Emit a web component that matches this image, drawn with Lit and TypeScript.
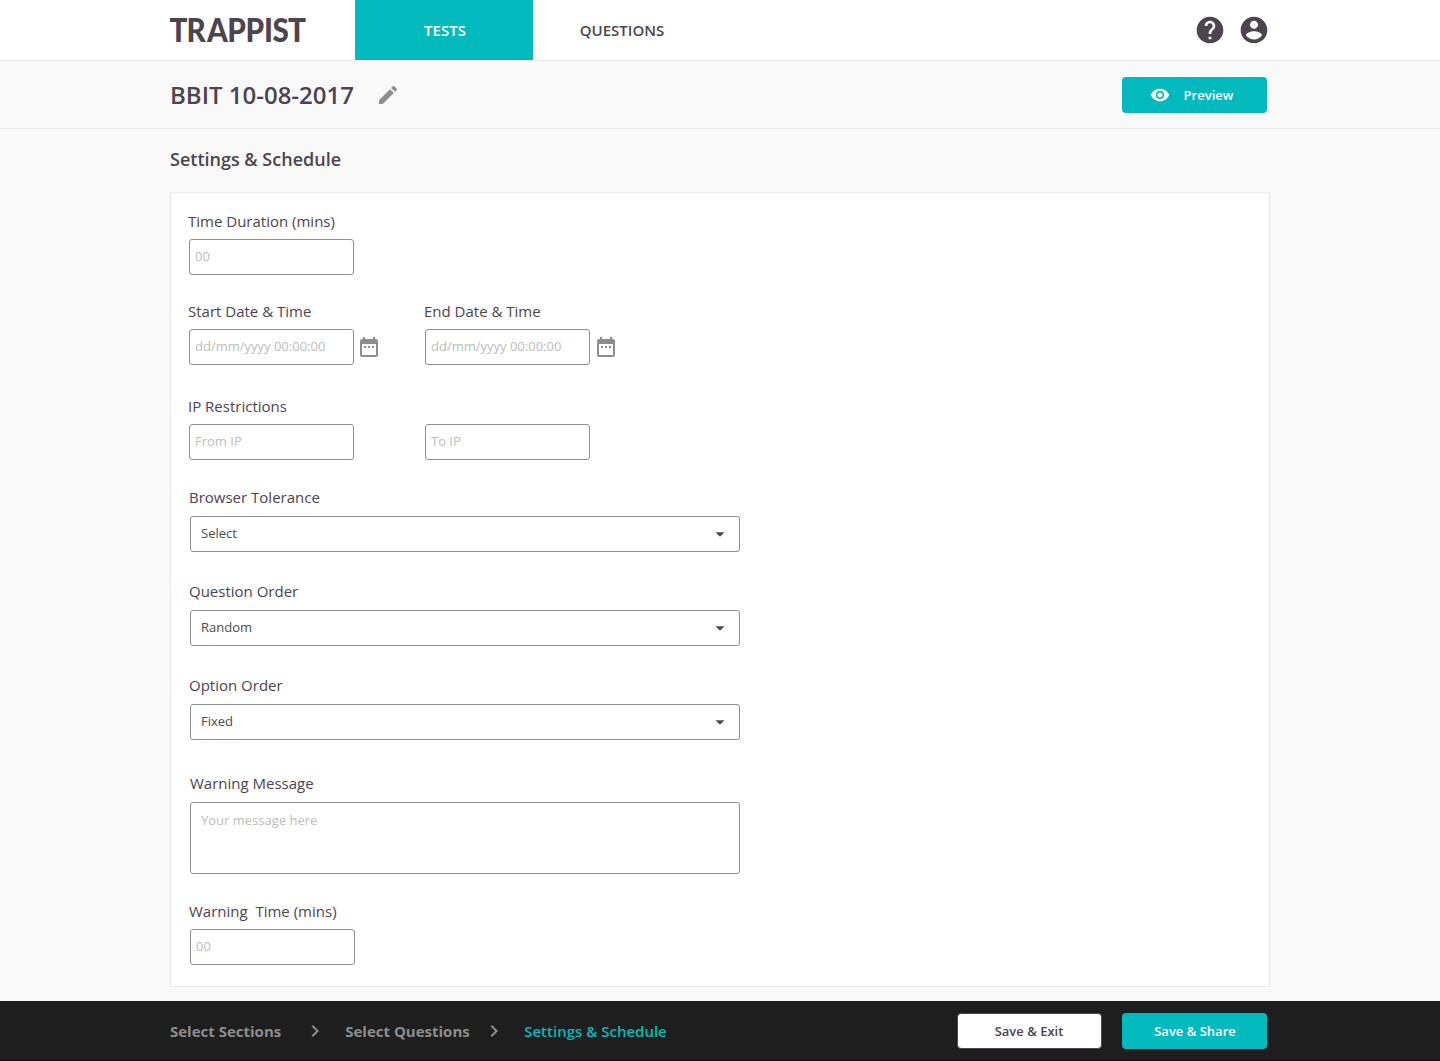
import { LitElement, html, css, svg } from "lit";
import { customElement, property } from "lit/decorators.js";

const icons = {
  pencil: svg`<path d="M3 17.25V21h3.75L17.81 9.94l-3.75-3.75L3 17.25zM20.71 7.04c.39-.39.39-1.02 0-1.41l-2.34-2.34c-.39-.39-1.02-.39-1.41 0l-1.83 1.83 3.75 3.75 1.83-1.83z"/>`,
  help: svg`<path d="M12 2C6.48 2 2 6.48 2 12s4.48 10 10 10 10-4.48 10-10S17.52 2 12 2zm1 17h-2v-2h2v2zm2.07-7.75l-.9.92C13.45 12.9 13 13.5 13 15h-2v-.5c0-1.1.45-2.1 1.17-2.83l1.24-1.26c.37-.36.59-.86.59-1.41 0-1.1-.9-2-2-2s-2 .9-2 2H8c0-2.21 1.79-4 4-4s4 1.79 4 4c0 .88-.36 1.68-.93 2.25z"/>`,
  account: svg`<path d="M12 2C6.48 2 2 6.48 2 12s4.48 10 10 10 10-4.48 10-10S17.52 2 12 2zm0 3c1.66 0 3 1.34 3 3s-1.34 3-3 3-3-1.34-3-3 1.34-3 3-3zm0 14.2c-2.5 0-4.71-1.28-6-3.22.03-1.99 4-3.08 6-3.08 1.99 0 5.97 1.09 6 3.08-1.29 1.94-3.5 3.22-6 3.22z"/>`,
  eye: svg`<path d="M12 4.5C7 4.5 2.73 7.61 1 12c1.73 4.39 6 7.5 11 7.5s9.27-3.11 11-7.5c-1.73-4.39-6-7.5-11-7.5zM12 17c-2.76 0-5-2.24-5-5s2.24-5 5-5 5 2.24 5 5-2.24 5-5 5zm0-8c-1.66 0-3 1.34-3 3s1.34 3 3 3 3-1.34 3-3-1.34-3-3-3z"/>`,
  calendar: svg`<path d="M9 11H7v2h2v-2zm4 0h-2v2h2v-2zm4 0h-2v2h2v-2zm2-7h-1V2h-2v2H8V2H6v2H5c-1.11 0-1.99.9-1.99 2L3 20c0 1.1.89 2 2 2h14c1.1 0 2-.9 2-2V6c0-1.1-.9-2-2-2zm0 16H5V9h14v11z"/>`,
  chevron: svg`<path d="M10 6L8.59 7.41 13.17 12l-4.58 4.59L10 18l6-6z"/>`,
  caret: svg`<path d="M7 10l5 5 5-5z"/>`,
};

@customElement("ui-icon")
export class UiIcon extends LitElement {
  @property() name: keyof typeof icons = "help";
  static styles = css`
    :host { display: inline-flex; flex: none; width: 24px; height: 24px; }
    svg { width: 100%; height: 100%; fill: currentColor; display: block; }
  `;
  render() {
    return html`<svg viewBox="0 0 24 24" aria-hidden="true">${icons[this.name]}</svg>`;
  }
}

@customElement("app-root")
export class AppRoot extends LitElement {
  static styles = css`
    :host {
      display: flex; flex-direction: column; width: 1440px; height: 1061px;
      background: #f9f9f9; color: #4d444f; overflow: hidden;
      font-family: "Open Sans", sans-serif;
    }
    * { box-sizing: border-box; }
    .top, .title-bar, .footer { display: flex; align-items: center; padding: 0 173px 0 170px; flex: none; }
    .top { height: 61px; background: #fff; border-bottom: 1px solid #ebebeb; }
    .logo { width: 185px; height: 60px; flex: none; overflow: visible; }
    .logo text { font: 900 33px Lato, sans-serif; fill: #4d444f; }
    .tab { height: 60px; display: flex; align-items: center; justify-content: center; width: 178px; font-size: 15px; font-weight: 600; padding-bottom: 1px; }
    .tab.active { background: #02babd; color: #fff; padding-left: 2px; }
    .push { margin-left: auto; }
    .round { width: 32px; height: 32px; }
    .round-group { display: flex; gap: 12px; margin-right: -3px; }
    .title-bar { height: 68px; border-bottom: 1px solid #ebebeb; }
    h1 { margin: 0 22px 0 0; font-size: 24px; font-weight: 600; line-height: 34px; white-space: nowrap; }
    .edit { color: #8d8d8d; }
    .btn {
      width: 145px; height: 36px; border: 0; border-radius: 4px; background: #02babd; color: #fff;
      font: 600 13px "Open Sans", sans-serif; display: flex; align-items: center; justify-content: center; padding: 0;
    }
    .btn.preview { gap: 14px; padding-right: 6px; }
    .btn.preview ui-icon { width: 20px; height: 20px; }
    .btn.plain { background: #fff; color: #4d444f; border: 1px solid #4d444f; padding: 0 1px 1px 0; }
    .btn.share { padding: 0 0 1px 1px; }
    main { flex: 1; padding: 16px 170px 0; }
    h2 { margin: 0; font-size: 18px; font-weight: 600; line-height: 28px; }
    .card { margin-top: 19px; height: 795px; background: #fff; border: 1px solid #ebebeb; padding: 18px 17px 0; }
    .row { display: flex; height: 90px; }
    .row.ip { height: 91px; }
    .row.dates { height: 95px; }
    .row.select { height: 94px; padding-left: 1px; }
    .row.last-select { height: 98px; padding-left: 1px; }
    .row.message { height: 128px; padding-left: 1px; }
    .row.time { padding-left: 1px; }
    .field { width: 236px; }
    .field.wide { width: 551px; }
    label { display: block; height: 20px; font-size: 15px; line-height: 20px; white-space: pre; }
    .message label { padding-left: 1px; }
    .control { display: flex; align-items: center; margin: 8px 0 0 1px; }
    .wide .control { margin-top: 9px; }
    .control ui-icon { color: #8d8d8d; margin-left: 3px; }
    .end .control ui-icon { margin-left: 4px; }
    input, textarea, .dropdown {
      border: 1px solid #8f8f8f; border-radius: 3px; background: #fff; height: 36px; margin: 0;
      font: 13px "Open Sans", sans-serif; color: #4c4c4c; outline: none; resize: none;
    }
    input { width: 165px; padding: 0 5px 2px; }
    textarea { width: 550px; height: 72px; padding: 8px 10px; display: block; }
    input::placeholder, textarea::placeholder { color: #bdbdbd; opacity: 1; }
    .dropdown { width: 550px; display: flex; align-items: center; justify-content: space-between; padding: 0 8px 2px 10px; }
    .dropdown .control-caret { width: 22px; height: 22px; color: #4c4c4c; margin: 2px 0 0; }
    .footer { height: 60px; background: #1e1e1e; border-bottom: 1px solid #101010; font-size: 15px; font-weight: 700; color: #8d8d8d; padding-top: 1px; }
    .step { white-space: nowrap; }
    .footer ui-icon { margin: 0 18px 0 22px; }
    .footer ui-icon.second { margin: 0 18.5px 0 12px; }
    .step.current { color: #02babd; font-weight: 600; }
    .actions { display: flex; gap: 20px; }
  `;

  private dropdown(label: string, value: string, cls = "select") {
    return html`<div class="row ${cls}"><div class="field wide">
      <label>${label}</label>
      <div class="control"><div class="dropdown"><span>${value}</span><ui-icon class="control-caret" name="caret"></ui-icon></div></div>
    </div></div>`;
  }

  private input(label: string, placeholder: string, calendar = false, cls = "") {
    return html`<div class="field ${cls}">
      <label>${label}</label>
      <div class="control"><input placeholder=${placeholder} />${calendar ? html`<ui-icon name="calendar"></ui-icon>` : ""}</div>
    </div>`;
  }

  render() {
    return html`
      <header class="top">
        <svg class="logo" viewBox="0 0 185 60"><text transform="scale(.9 1)" y="42" x="-0.5 18.4 41 63.5 84 104.5 113.8 131">TRAPPIST</text></svg>
        <div class="tab active">TESTS</div>
        <div class="tab">QUESTIONS</div>
        <div class="round-group push">
          <ui-icon class="round" name="help"></ui-icon>
          <ui-icon class="round" name="account"></ui-icon>
        </div>
      </header>
      <div class="title-bar">
        <h1>BBIT 10-08-2017</h1>
        <ui-icon class="edit" name="pencil"></ui-icon>
        <button class="btn preview push"><ui-icon name="eye"></ui-icon><span>Preview</span></button>
      </div>
      <main>
        <h2>Settings &amp; Schedule</h2>
        <section class="card">
          <div class="row">${this.input("Time Duration (mins)", "00")}</div>
          <div class="row dates">
            ${this.input("Start Date & Time", "dd/mm/yyyy 00:00:00", true)}
            ${this.input("End Date & Time", "dd/mm/yyyy 00:00:00", true, "end")}
          </div>
          <div class="row ip">${this.input("IP Restrictions", "From IP")}${this.input("", "To IP")}</div>
          ${this.dropdown("Browser Tolerance", "Select")}
          ${this.dropdown("Question Order", "Random")}
          ${this.dropdown("Option Order", "Fixed", "last-select")}
          <div class="row message"><div class="field wide">
            <label>Warning Message</label>
            <div class="control"><textarea placeholder="Your message here"></textarea></div>
          </div></div>
          <div class="row time">${this.input("Warning  Time (mins)", "00")}</div>
        </section>
      </main>
      <footer class="footer">
        <span class="step">Select Sections</span>
        <ui-icon name="chevron"></ui-icon>
        <span class="step">Select Questions</span>
        <ui-icon class="second" name="chevron"></ui-icon>
        <span class="step current">Settings &amp; Schedule</span>
        <div class="actions push">
          <button class="btn plain">Save &amp; Exit</button>
          <button class="btn share">Save &amp; Share</button>
        </div>
      </footer>
    `;
  }
}
